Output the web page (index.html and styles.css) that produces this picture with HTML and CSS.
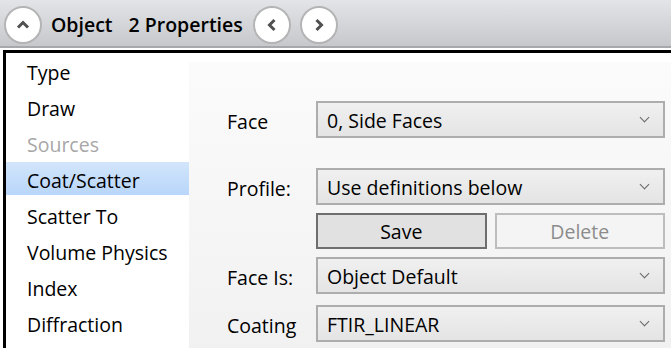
FILE: index.html
```html
<!DOCTYPE html>
<html lang="en">
<head>
    <meta charset="UTF-8">
    <title>Object Properties</title>
    <link rel="stylesheet" href="styles.css">
</head>
<body>
    <div class="toolbar">
        <button class="round-btn">
            <svg width="14" height="14" viewBox="0 0 14 14"><path d="M2 9.5 L7 4.5 L12 9.5" fill="none" stroke="#505050" stroke-width="3"/></svg>
        </button>
        <span class="title">Object</span>
        <span class="title title-count">2 Properties</span>
        <button class="round-btn nav-prev">
            <svg width="14" height="14" viewBox="0 0 14 14"><path d="M9.5 2 L4.5 7 L9.5 12" fill="none" stroke="#505050" stroke-width="3"/></svg>
        </button>
        <button class="round-btn">
            <svg width="14" height="14" viewBox="0 0 14 14"><path d="M4.5 2 L9.5 7 L4.5 12" fill="none" stroke="#505050" stroke-width="3"/></svg>
        </button>
    </div>
    <div class="frame">
        <ul class="side-list">
            <li>Type</li>
            <li>Draw</li>
            <li class="disabled">Sources</li>
            <li class="selected">Coat/Scatter</li>
            <li>Scatter To</li>
            <li>Volume Physics</li>
            <li>Index</li>
            <li>Diffraction</li>
        </ul>
        <div class="form-panel">
            <div class="row row-face">
                <label>Face</label>
                <div class="combo">0, Side Faces<span class="chev"></span></div>
            </div>
            <div class="row row-profile">
                <label>Profile:</label>
                <div class="combo">Use definitions below<span class="chev"></span></div>
            </div>
            <div class="btn-row">
                <button class="btn btn-save">Save</button>
                <button class="btn btn-delete">Delete</button>
            </div>
            <div class="row row-faceis">
                <label>Face Is:</label>
                <div class="combo">Object Default<span class="chev"></span></div>
            </div>
            <div class="row row-coating">
                <label>Coating</label>
                <div class="combo">FTIR_LINEAR<span class="chev"></span></div>
            </div>
        </div>
    </div>
</body>
</html>
```

FILE: styles.css
```css
* {
    box-sizing: border-box;
}

body {
    margin: 0;
    width: 671px;
    height: 348px;
    overflow: hidden;
    font-family: 'Open Sans', 'Noto Sans', sans-serif;
    color: #000;
    background-color: #ffffff;
}

.toolbar {
    height: 48px;
    display: flex;
    align-items: center;
    padding-left: 4px;
    padding-top: 3px;
    background: linear-gradient(#e2e4e7, #c6c8cb);
    border-bottom: 2px solid #a6a8ab;
}

.round-btn {
    width: 38px;
    height: 38px;
    border-radius: 50%;
    border: 2px solid #b4b4b4;
    background-color: #ffffff;
    padding: 0;
    display: flex;
    align-items: center;
    justify-content: center;
}

.title {
    font-size: 19.5px;
    font-weight: 600;
    margin-left: 9px;
}

.title-count {
    margin-left: 16px;
    margin-right: 10px;
}

.nav-prev {
    margin-right: 9px;
}

.frame {
    margin-top: 2px;
    margin-left: 3px;
    height: 300px;
    border-top: 3px solid #000;
    border-left: 3px solid #000;
    display: flex;
    background-color: #ffffff;
}

.side-list {
    list-style: none;
    margin: 0;
    padding: 0;
    width: 183px;
    padding-top: 1px;
}

.side-list li {
    height: 33px;
    line-height: 33px;
    margin-bottom: 3px;
    padding-left: 21px;
    padding-top: 2px;
    font-size: 19.5px;
}

.side-list li.disabled {
    color: #a7a7a7;
}

.side-list li.selected {
    background: linear-gradient(#d2e5fb, #b8d6fa);
}

.form-panel {
    flex: 1;
    margin-top: 9px;
    background: linear-gradient(#fbfbfb, #f1f1f1);
    padding: 39px 6px 0 38px;
}

.row {
    display: flex;
    align-items: center;
    height: 37px;
}

.row label {
    width: 89px;
    font-size: 19.5px;
    padding-top: 3px;
}

.combo {
    flex: 1;
    height: 37px;
    border: 2px solid #adadad;
    background: linear-gradient(#f0f0f0, #e4e4e4);
    font-size: 19.5px;
    line-height: 36px;
    padding-left: 9px;
    position: relative;
}

.chev {
    position: absolute;
    right: 15px;
    top: 11px;
    width: 7px;
    height: 7px;
    border-right: 1.5px solid #666;
    border-bottom: 1.5px solid #666;
    transform: rotate(45deg);
}

.row-profile {
    margin-top: 30px;
}

.btn-row {
    display: flex;
    gap: 8px;
    margin-top: 8px;
    margin-left: 89px;
}

.btn {
    flex: 1;
    height: 36px;
    font-family: inherit;
    font-size: 19.5px;
    line-height: 30px;
    padding-top: 2px;
}

.btn-save {
    border: 2px solid #6e6e6e;
    background-color: #e1e1e1;
    color: #000;
}

.btn-delete {
    border: 2px solid #bdbdbd;
    background-color: #f4f4f4;
    color: #8c8c8c;
}

.row-faceis {
    margin-top: 8px;
}

.row-coating {
    margin-top: 11px;
}
```
